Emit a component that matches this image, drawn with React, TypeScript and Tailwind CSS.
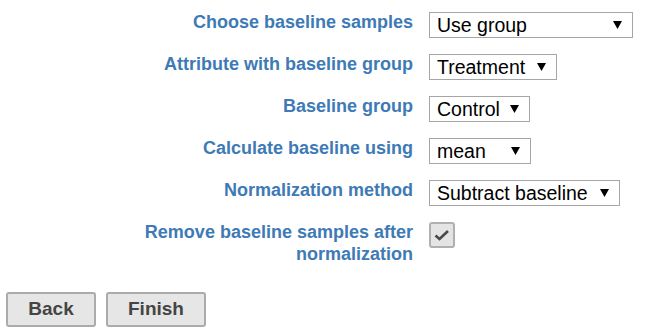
import React from 'react';

const rows: { label: string; value: string; width: string }[] = [
  { label: 'Choose baseline samples', value: 'Use group', width: 'w-[204px]' },
  { label: 'Attribute with baseline group', value: 'Treatment', width: 'w-[128px]' },
  { label: 'Baseline group', value: 'Control', width: 'w-[101px]' },
  { label: 'Calculate baseline using', value: 'mean', width: 'w-[102px]' },
  { label: 'Normalization method', value: 'Subtract baseline', width: 'w-[191px]' },
];

function Caret() {
  return (
    <svg width="9" height="8" viewBox="0 0 9 8" className="shrink-0">
      <polygon points="0,0 9,0 4.5,8" fill="#000" />
    </svg>
  );
}

function FakeSelect({ value, width }: { value: string; width: string }) {
  return (
    <div
      className={`flex h-[26px] items-center justify-between border border-[#a6a6a6] bg-white pl-[7px] pr-[10px] ${width}`}
    >
      <span className="pt-px text-[19.5px] leading-none text-black">{value}</span>
      <Caret />
    </div>
  );
}

export default function App() {
  return (
    <div className="min-h-screen bg-white font-['Liberation_Sans',Arial,sans-serif]">
      <div className="grid grid-cols-[270px_auto] gap-x-4 gap-y-4 pl-[143px] pt-[12px]">
        {rows.map((row) => (
          <React.Fragment key={row.label}>
            <label className="-mt-px text-right text-[18px] font-bold leading-[22px] text-[#3d7ab6]">
              {row.label}
            </label>
            <div className="justify-self-start">
              <FakeSelect value={row.value} width={row.width} />
            </div>
          </React.Fragment>
        ))}
        <label className="-mt-px text-right text-[18px] font-bold leading-[22px] text-[#3d7ab6]">
          Remove baseline samples after normalization
        </label>
        <div className="justify-self-start">
          <div className="flex h-[26px] w-[26px] items-center justify-center rounded-[3px] border-2 border-[#b0b0b0] bg-[#e4e4e4]">
            <svg width="16" height="12" viewBox="0 0 16 12">
              <path d="M1.5 6.5 L5.5 10 L14 2" fill="none" stroke="#4a4a4a" strokeWidth="2.6" />
            </svg>
          </div>
        </div>
      </div>
      <div className="flex gap-[10px] pl-[6px] pt-[27px]">
        <button className="h-[35px] w-[90px] rounded-[3px] border-2 border-[#ababab] bg-[#e6e6e6] text-[19px] font-bold text-[#454545]">
          Back
        </button>
        <button className="h-[35px] w-[100px] rounded-[3px] border-2 border-[#ababab] bg-[#e6e6e6] text-[19px] font-bold text-[#454545]">
          Finish
        </button>
      </div>
    </div>
  );
}
